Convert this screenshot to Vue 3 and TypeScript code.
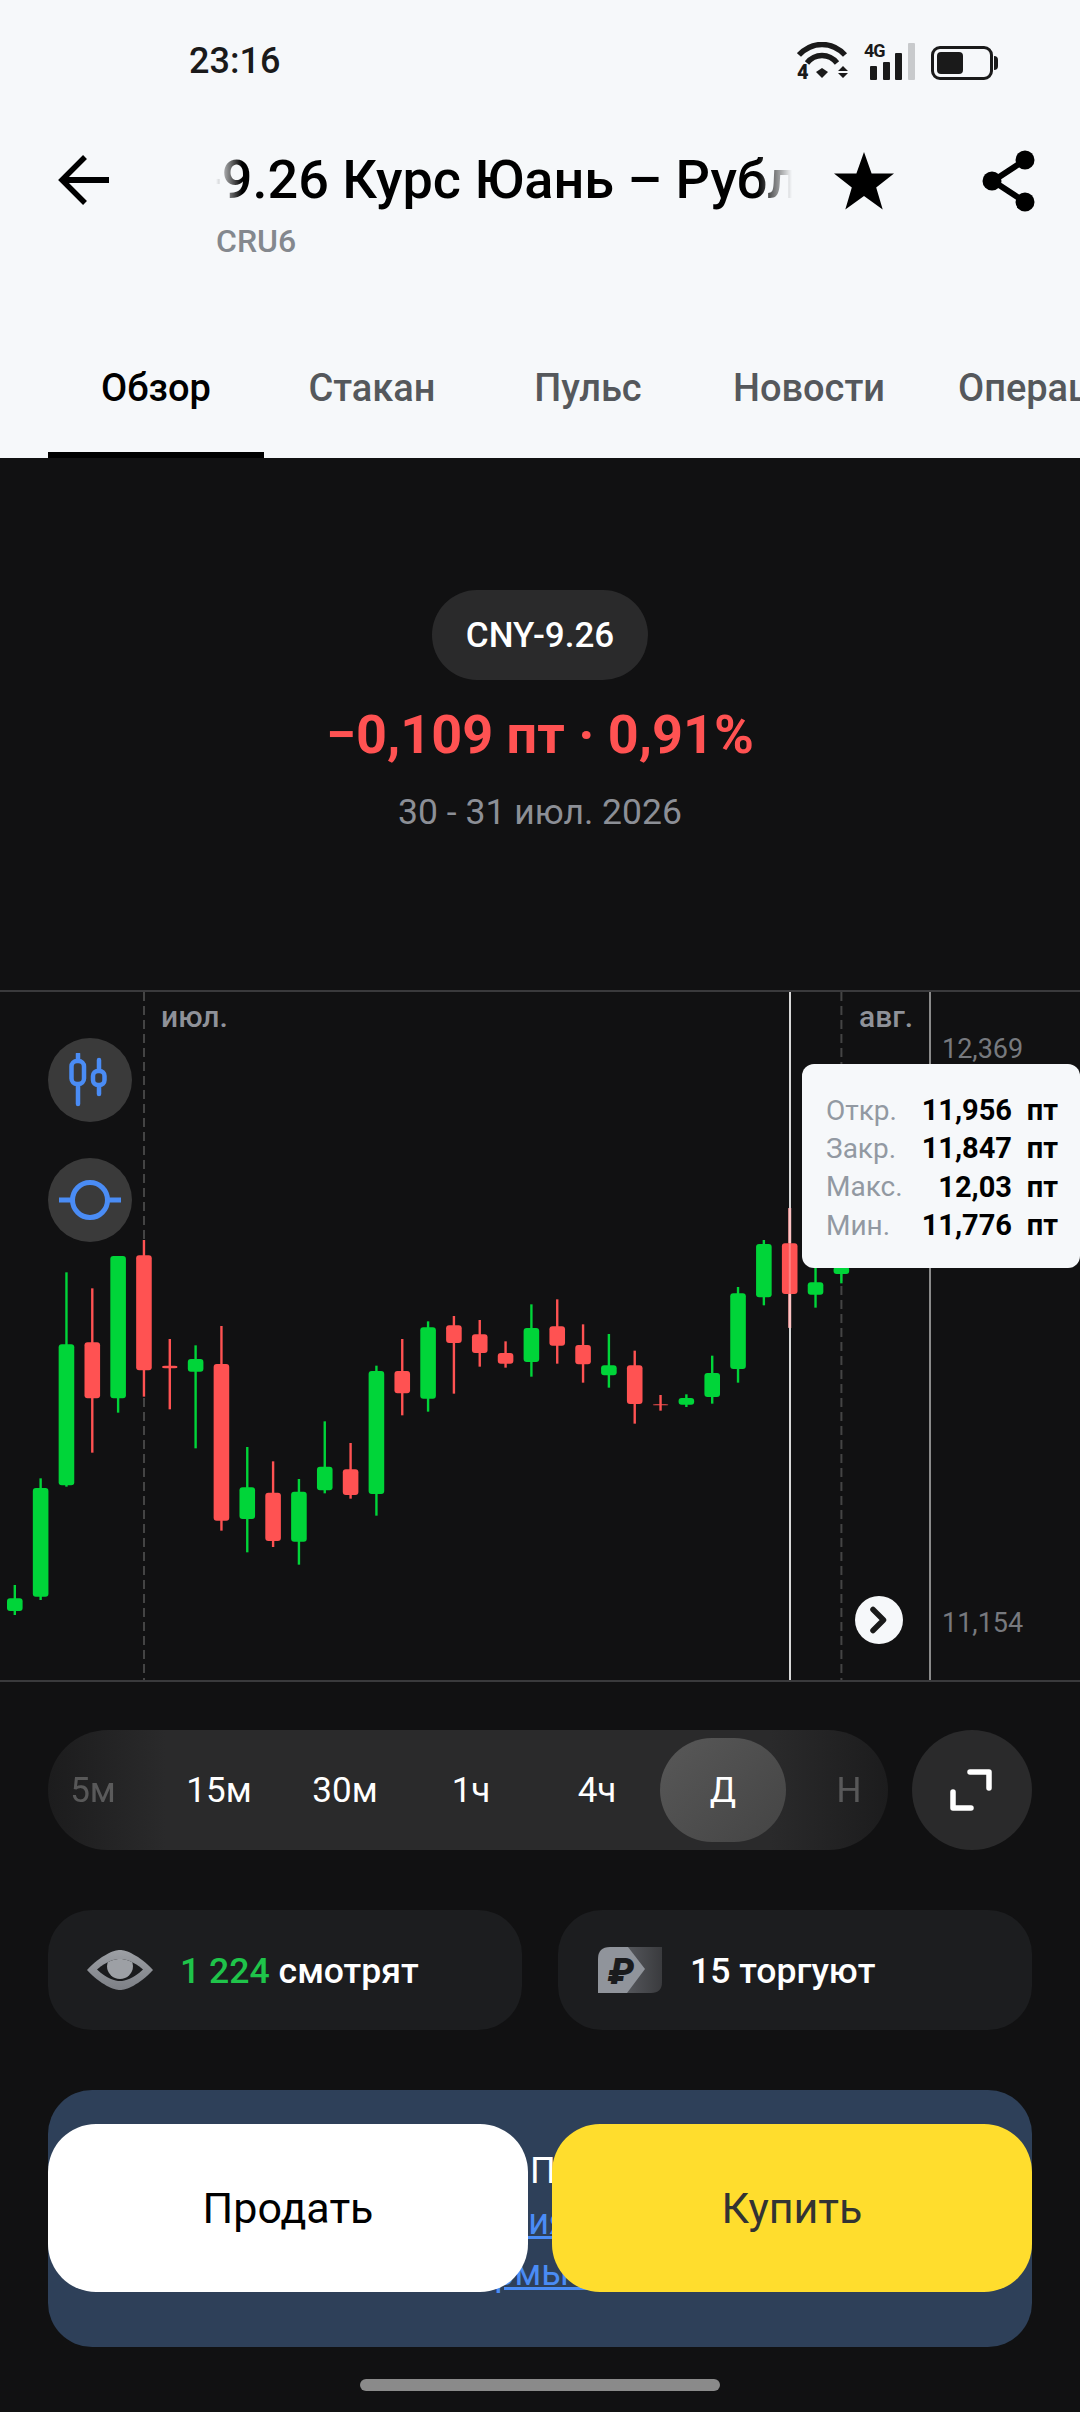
<script setup lang="ts">
type Candle = [string, number, number, number, number]

const chartTop = 990
const candleGap = 25.83

// wick top, body top, body bottom, wick bottom, measured from y=1240 at 3x
const raw: Candle[] = [
  ['g', 1035, 1075, 1113, 1125],
  ['g', 715, 744, 1070, 1080],
  ['g', 97, 313, 736, 740],
  ['r', 145, 307, 475, 638],
  ['g', 48, 48, 475, 518],
  ['r', 0, 46, 391, 470],
  ['r', 297, 377, 385, 508],
  ['g', 316, 357, 395, 625],
  ['r', 258, 372, 842, 872],
  ['g', 621, 742, 837, 937],
  ['r', 664, 758, 903, 921],
  ['g', 717, 755, 905, 974],
  ['g', 544, 680, 751, 760],
  ['r', 609, 688, 765, 776],
  ['g', 377, 393, 762, 827],
  ['r', 297, 393, 460, 526],
  ['g', 244, 262, 476, 515],
  ['r', 228, 256, 309, 461],
  ['r', 240, 283, 339, 380],
  ['r', 304, 339, 371, 383],
  ['g', 193, 264, 366, 410],
  ['r', 178, 259, 317, 371],
  ['r', 253, 315, 373, 428],
  ['g', 282, 376, 406, 443],
  ['r', 332, 376, 492, 551],
  ['r', 465, 493, 496, 512],
  ['g', 463, 474, 494, 501],
  ['g', 347, 399, 471, 491],
  ['g', 141, 160, 387, 428],
  ['g', 0, 12, 172, 196],
  ['r', -95, 10, 162, 262],
  ['g', 60, 127, 164, 203],
  ['g', 60, 80, 102, 130],
]

const toY = (z: number) => 1240 + z / 3 - chartTop

const candles = raw.map((c, i) => ({
  id: i,
  x: 14.8 + i * candleGap,
  color: c[0] === 'g' ? '#00d539' : '#ff5252',
  wickTop: toY(c[1]),
  bodyTop: toY(c[2]),
  bodyH: (c[3] - c[2]) / 3,
  wickBottom: toY(c[4]),
}))

const tabs = ['Обзор', 'Стакан', 'Пульс', 'Новости', 'Операции']
const periods = ['5м', '15м', '30м', '1ч', '4ч', 'Д', 'Н']
const quotes = [
  { label: 'Откр.', value: '11,956' },
  { label: 'Закр.', value: '11,847' },
  { label: 'Макс.', value: '12,03' },
  { label: 'Мин.', value: '11,776' },
]
</script>

<template>
  <div class="screen">
    <div class="top">
      <div class="status">
        <span class="clock">23:16</span>
        <div class="status-icons">
          <svg class="wifi" width="52" height="42" viewBox="0 0 52 42">
            <path d="M2 13 C15 -1 35 -1 48 13" fill="none" stroke="#1a1a1a" stroke-width="5.5" />
            <path d="M10 21 C18 11 32 11 40 21" fill="none" stroke="#1a1a1a" stroke-width="5.5" />
            <path d="M19 30 L25 26 L31 30 L25 36 Z" fill="#1a1a1a" />
            <path d="M41 29 L46 24 L51 29 Z M41 31 L51 31 L46 36 Z" fill="#1a1a1a" />
            <text x="0" y="37" class="tiny">4</text>
          </svg>
          <div class="signal">
            <span class="net">4G</span>
            <i class="bar b1"></i>
            <i class="bar b2"></i>
            <i class="bar b3"></i>
            <i class="bar b4"></i>
          </div>
          <div class="battery"><i></i></div>
        </div>
      </div>

      <div class="header">
        <svg class="back" width="52" height="50" viewBox="0 0 52 50">
          <path d="M28 2 L5 25 L28 48" fill="none" stroke="#000" stroke-width="5.5" />
          <path d="M6 25 H52" stroke="#000" stroke-width="6" />
        </svg>
        <div class="title-col">
          <div class="title-window"><span class="title">CNY-9.26 Курс Юань – Рубль</span></div>
          <div class="ticker">CRU6</div>
        </div>
        <svg class="star" width="62" height="58" viewBox="0 0 62 58">
          <path d="M31 0 L38.6 21.5 L61 21.5 L43.2 35.5 L49.7 57.5 L31 44 L12.3 57.5 L18.8 35.5 L1 21.5 L23.4 21.5 Z" fill="#000" />
        </svg>
        <svg class="share" width="56" height="62" viewBox="0 0 56 62">
          <path d="M44 10 L12 31 L44 52" fill="none" stroke="#000" stroke-width="6" />
          <circle cx="44" cy="10" r="9.5" />
          <circle cx="11" cy="31" r="9.5" />
          <circle cx="44" cy="52" r="9.5" />
        </svg>
      </div>

      <div class="tabs">
        <div v-for="(t, i) in tabs" :key="t" class="tab" :class="{ active: i === 0 }">{{ t }}</div>
      </div>
    </div>

    <div class="main">
      <div class="summary">
        <div class="chip">CNY-9.26</div>
        <div class="change">−0,109 пт · 0,91%</div>
        <div class="range">30 - 31 июл. 2026</div>
      </div>

      <div class="chart">
        <svg class="plot" width="1080" height="692" viewBox="0 0 1080 692">
          <line x1="0" x2="1080" y1="1" y2="1" stroke="#3a3a3c" stroke-width="2" />
          <line x1="0" x2="1080" y1="691" y2="691" stroke="#3a3a3c" stroke-width="2" />
          <line x1="144" x2="144" y1="2" y2="690" stroke="#444" stroke-width="2" stroke-dasharray="9 5" />
          <line x1="841.4" x2="841.4" y1="2" y2="690" stroke="#444" stroke-width="2" stroke-dasharray="9 5" />
          <line x1="930" x2="930" y1="2" y2="690" stroke="#8a8a8a" stroke-width="2" />
          <line x1="790" x2="790" y1="2" y2="690" stroke="#d8d8d8" stroke-width="2" />
          <g v-for="c in candles" :key="c.id">
            <line :x1="c.x" :x2="c.x" :y1="c.wickTop" :y2="c.wickBottom" :stroke="c.color" stroke-width="2.4" />
            <rect :x="c.x - 7.8" :y="c.bodyTop" width="15.6" :height="c.bodyH" rx="3" :fill="c.color" />
          </g>
          <!-- crosshair sits on top of the selected candle -->
          <line x1="789.8" x2="789.8" y1="218" y2="253" stroke="#ffc4c4" stroke-width="2.8" />
          <line x1="789.8" x2="789.8" y1="253" y2="304" stroke="#ff8080" stroke-width="2" />
          <line x1="789.8" x2="789.8" y1="304" y2="338" stroke="#ffc4c4" stroke-width="2.8" />
        </svg>

        <span class="month m1">июл.</span>
        <span class="month m2">авг.</span>
        <span class="price p1">12,369</span>
        <span class="price p2">11,154</span>

        <button class="round r1">
          <svg width="44" height="54" viewBox="0 0 44 54">
            <path d="M10 1 V51 M31 7 V41" stroke="#4a8cf5" stroke-width="4.5" stroke-linecap="round" />
            <rect x="3.5" y="8" width="12.5" height="23" rx="5.5" fill="#3a3a3a" stroke="#4a8cf5" stroke-width="4.5" />
            <rect x="25" y="18" width="11.5" height="14" rx="5" fill="#3a3a3a" stroke="#4a8cf5" stroke-width="4.5" />
          </svg>
        </button>
        <button class="round r2">
          <svg width="62" height="42" viewBox="0 0 62 42">
            <path d="M0 21 H12 M50 21 H62" stroke="#4a8cf5" stroke-width="5" />
            <circle cx="31" cy="21" r="17.5" fill="none" stroke="#4a8cf5" stroke-width="5" />
          </svg>
        </button>
        <button class="jump">
          <svg width="20" height="28" viewBox="0 0 20 28">
            <path d="M4 3.5 L14.5 14 L4 24.5" fill="none" stroke="#1a1a1a" stroke-width="5.5" stroke-linecap="round" stroke-linejoin="round" />
          </svg>
        </button>

        <div class="tooltip">
          <div v-for="q in quotes" :key="q.label" class="quote">
            <span class="q-label">{{ q.label }}</span>
            <span class="q-value">{{ q.value }}</span>
            <span class="q-unit">пт</span>
          </div>
        </div>
      </div>

      <div class="controls">
        <div class="period-row">
          <div class="periods">
            <div class="period-track">
              <div
                v-for="(p, i) in periods"
                :key="p"
                class="period"
                :class="{ selected: p === 'Д', dim: i === 0 || i === 6 }"
              >{{ p }}</div>
            </div>
          </div>
          <button class="expand">
            <svg width="50" height="46" viewBox="0 0 50 46">
              <path d="M23 5 H42 V21 M6 25 V41 H24" fill="none" stroke="#fff" stroke-width="5.5" stroke-linecap="round" stroke-linejoin="round" />
            </svg>
          </button>
        </div>

        <div class="stats">
          <div class="stat">
            <svg class="eye" width="66" height="40" viewBox="0 0 66 40">
              <defs>
                <linearGradient id="eyeFill" x1="0" y1="0" x2="0" y2="1">
                  <stop offset="0" stop-color="#9da0a5" />
                  <stop offset="1" stop-color="#7d8086" />
                </linearGradient>
                <clipPath id="slit">
                  <path d="M10 19.5 C20 11 28 9 33 9 C38 9 46 11 56 19.5 C46 29 38 31 33 31 C28 31 20 29 10 19.5 Z" />
                </clipPath>
              </defs>
              <path d="M0 20 C14 5 27 0 33 0 C39 0 52 5 66 20 C52 35 39 40 33 40 C27 40 14 35 0 20 Z" fill="url(#eyeFill)" />
              <path d="M10 19.5 C20 11 28 9 33 9 C38 9 46 11 56 19.5 C46 29 38 31 33 31 C28 31 20 29 10 19.5 Z" fill="#1a1b1d" />
              <circle cx="33" cy="16" r="13" fill="#9da0a5" clip-path="url(#slit)" />
            </svg>
            <span class="stat-text"><em>1 224</em> смотрят</span>
          </div>
          <div class="stat">
            <svg class="coin" width="64" height="46" viewBox="0 0 64 46">
              <defs>
                <linearGradient id="coinBack" x1="0" y1="0" x2="1" y2="0">
                  <stop offset="0" stop-color="#55575c" />
                  <stop offset="1" stop-color="#3a3b3e" />
                </linearGradient>
              </defs>
              <path d="M28 0 H64 V35 Q64 46 53 46 H28 Z" fill="url(#coinBack)" />
              <path d="M12 0 H30 L47 22 L29 46 H0 V12 Q0 0 12 0 Z" fill="#90949b" />
              <text x="10" y="37" class="ruble">₽</text>
            </svg>
            <span class="stat-text">15 торгуют</span>
          </div>
        </div>

        <div class="deal">
          <div class="banner">
            <div class="banner-line">Внимание! Поставка из</div>
            <a class="banner-link">Ограничения торговли</a>
            <a class="banner-link">нормы ЦБ</a>
          </div>
          <button class="trade sell">Продать</button>
          <button class="trade buy">Купить</button>
        </div>
      </div>

      <div class="home"></div>
    </div>
  </div>
</template>

<style scoped>
.screen {
  width: 1080px;
  height: 2412px;
  overflow: hidden;
  background: #111112;
  font-family: Roboto, "Noto Sans", sans-serif;
  display: flex;
  flex-direction: column;
}

.top {
  background: #f6f8fa;
  height: 458px;
  display: flex;
  flex-direction: column;
}

.status {
  height: 122px;
  flex: none;
  display: flex;
  align-items: center;
  justify-content: space-between;
  padding: 0 85px 0 189px;
  box-sizing: border-box;
}

.clock {
  font-size: 36px;
  font-weight: 500;
  color: #1a1a1a;
}

.status-icons {
  display: flex;
  align-items: flex-end;
  gap: 15px;
}

.wifi {
  margin-bottom: -4px;
  margin-right: 0;
}

.tiny {
  font-size: 20px;
  font-weight: 900;
  fill: #1a1a1a;
}

.signal {
  position: relative;
  width: 52px;
  height: 37px;
  display: flex;
  align-items: flex-end;
  gap: 5.5px;
  padding-left: 6px;
  box-sizing: border-box;
}

.net {
  position: absolute;
  left: 0;
  top: -2px;
  font-size: 18px;
  font-weight: 700;
  letter-spacing: -1px;
  color: #1a1a1a;
  line-height: 20px;
}

.bar {
  width: 7px;
  background: #1a1a1a;
  border-radius: 1px;
}

.b1 { height: 14px; }
.b2 { height: 18px; }
.b3 { height: 27px; }
.b4 { height: 37px; background: #c8cacc; }

.battery {
  width: 62px;
  height: 34px;
  border: 3px solid #1a1a1a;
  border-radius: 9px;
  box-sizing: border-box;
  padding: 3px;
  position: relative;
  margin-right: 2px;
}

.battery i {
  display: block;
  width: 26px;
  height: 100%;
  background: #1a1a1a;
  border-radius: 4px;
}

.battery::after {
  content: "";
  position: absolute;
  right: -8px;
  top: 7px;
  width: 4px;
  height: 14px;
  background: #1a1a1a;
  border-radius: 0 4px 4px 0;
}

.header {
  height: 220px;
  flex: none;
  display: flex;
  align-items: flex-start;
  padding: 28px 45px 0 57px;
  box-sizing: border-box;
  position: relative;
}

.back {
  margin-top: 5px;
  flex: none;
}

.title-col {
  margin-left: 107px;
  width: 576px;
  flex: none;
}

.title-window {
  width: 576px;
  height: 62px;
  overflow: hidden;
  white-space: nowrap;
  -webkit-mask-image: linear-gradient(90deg, transparent 0, #000 26px, #000 calc(100% - 34px), transparent 100%);
  mask-image: linear-gradient(90deg, transparent 0, #000 26px, #000 calc(100% - 34px), transparent 100%);
}

.title {
  display: inline-block;
  margin-left: -116px;
  font-size: 54px;
  line-height: 60px;
  font-weight: 500;
  color: #000;
}

.ticker {
  margin-top: 10px;
  font-size: 32px;
  line-height: 38px;
  font-weight: 500;
  color: #84888e;
}

.star {
  flex: none;
  margin-left: 41px;
  margin-top: 2px;
}

.share {
  flex: none;
  margin-left: 86px;
}

.tabs {
  height: 116px;
  flex: none;
  display: flex;
  padding-left: 48px;
  overflow: hidden;
}

.tab {
  flex: 0 0 216px;
  height: 116px;
  box-sizing: border-box;
  padding-top: 24px;
  text-align: center;
  font-size: 38px;
  line-height: 44px;
  font-weight: 500;
  color: #55585c;
  white-space: nowrap;
}

.tab:nth-child(4) {
  flex-basis: 226px;
}

.tab:nth-child(5) {
  text-align: left;
  padding-left: 36px;
}

.tab.active {
  color: #000;
  border-bottom: 6px solid #000;
}

.main {
  flex: 1;
  display: flex;
  flex-direction: column;
}

.summary {
  height: 532px;
  flex: none;
  padding-top: 132px;
  box-sizing: border-box;
  display: flex;
  flex-direction: column;
  align-items: center;
}

.chip {
  width: 216px;
  height: 90px;
  border-radius: 45px;
  background: #2a2a2b;
  color: #fff;
  font-size: 35px;
  font-weight: 500;
  display: flex;
  align-items: center;
  justify-content: center;
}

.change {
  margin-top: 25px;
  font-size: 54px;
  line-height: 60px;
  font-weight: 700;
  color: #ff5252;
}

.range {
  margin-top: 25px;
  font-size: 35.5px;
  line-height: 44px;
  color: #8c8f96;
}

.chart {
  position: relative;
  height: 692px;
  flex: none;
}

.plot {
  position: absolute;
  left: 0;
  top: 0;
}

.month {
  position: absolute;
  top: 7px;
  font-size: 30px;
  line-height: 40px;
  font-weight: 500;
  color: #8f9299;
}

.m1 { left: 161px; }
.m2 { left: 859px; }

.price {
  position: absolute;
  left: 942px;
  font-size: 27px;
  line-height: 32px;
  color: #77797e;
}

.p1 { top: 43px; }
.p2 { top: 617px; }

.round {
  position: absolute;
  left: 48px;
  width: 84px;
  height: 84px;
  border: none;
  border-radius: 50%;
  background: #3a3a3a;
  padding: 0;
  display: flex;
  align-items: center;
  justify-content: center;
}

.r1 { top: 48px; }
.r2 { top: 168px; }

.jump {
  position: absolute;
  left: 855px;
  top: 606px;
  width: 48px;
  height: 48px;
  border: none;
  border-radius: 50%;
  background: #f6f8fa;
  padding: 0;
  display: flex;
  align-items: center;
  justify-content: center;
}

.tooltip {
  position: absolute;
  left: 802px;
  top: 74px;
  width: 278px;
  height: 204px;
  background: #f6f8fa;
  border-radius: 12px;
  box-sizing: border-box;
  padding: 27px 22px 0 24px;
}

.quote {
  display: grid;
  grid-template-columns: 1fr auto 46px;
  align-items: center;
  height: 38.3px;
  font-size: 28px;
}

.q-label {
  color: #9299a2;
}

.q-value,
.q-unit {
  font-size: 29px;
  font-weight: 700;
  color: #000;
}

.q-unit {
  text-align: right;
}

.controls {
  padding: 48px 48px 0;
  display: flex;
  flex-direction: column;
  gap: 60px;
}

.period-row {
  display: flex;
  gap: 24px;
}

.periods {
  width: 840px;
  height: 120px;
  flex: none;
  border-radius: 60px;
  overflow: hidden;
  background: linear-gradient(90deg, #1c1c1d 0, #2a2a2b 14%, #2a2a2b 86%, #1c1c1d 100%);
}

.period-track {
  display: flex;
  margin-left: -18px;
  height: 100%;
  align-items: center;
}

.period {
  flex: 0 0 126px;
  height: 104px;
  border-radius: 52px;
  display: flex;
  align-items: center;
  justify-content: center;
  color: #fff;
  font-size: 35px;
}

.period.selected {
  background: linear-gradient(135deg, #585858, #444);
}

.period.dim {
  opacity: 0.25;
}

.expand {
  width: 120px;
  height: 120px;
  flex: none;
  border: none;
  border-radius: 50%;
  background: #2a2a2b;
  padding: 0;
  display: flex;
  align-items: center;
  justify-content: center;
}

.stats {
  display: grid;
  grid-template-columns: 474px 474px;
  gap: 36px;
}

.stat {
  height: 120px;
  border-radius: 44px;
  background: #1c1d1f;
  display: flex;
  align-items: center;
  padding-left: 39px;
  gap: 27px;
  color: #fff;
}

.stat:nth-child(2) {
  padding-left: 40px;
  gap: 28px;
}

.stat-text {
  padding-top: 2px;
  font-size: 35.6px;
  font-weight: 500;
  white-space: nowrap;
}

.stat-text em {
  font-style: normal;
  color: #1fc44a;
}

.eye, .coin {
  flex: none;
}

.ruble {
  font-size: 37px;
  font-weight: 900;
  font-style: italic;
  fill: #1a1b1d;
}

.deal {
  position: relative;
}

.banner {
  height: 257px;
  border-radius: 44px;
  background: #2e4059;
  box-sizing: border-box;
  padding-top: 56px;
  display: flex;
  flex-direction: column;
  align-items: center;
  font-size: 36px;
  line-height: 51px;
  color: #fff;
}

.banner-link {
  color: #4a8cf5;
  text-decoration: underline;
}

.trade {
  position: absolute;
  top: 34px;
  width: 480px;
  height: 168px;
  border: none;
  border-radius: 48px;
  font-family: inherit;
  font-size: 43px;
  padding: 0;
}

.sell {
  left: 0;
  background: #fff;
  color: #000;
}

.buy {
  right: 0;
  background: #ffdd2d;
  color: #333;
}

.home {
  align-self: center;
  margin-top: 32px;
  width: 360px;
  height: 12px;
  border-radius: 6px;
  background: #8a8a8a;
}
</style>

<style>
html, body {
  background: #111112;
}
</style>
